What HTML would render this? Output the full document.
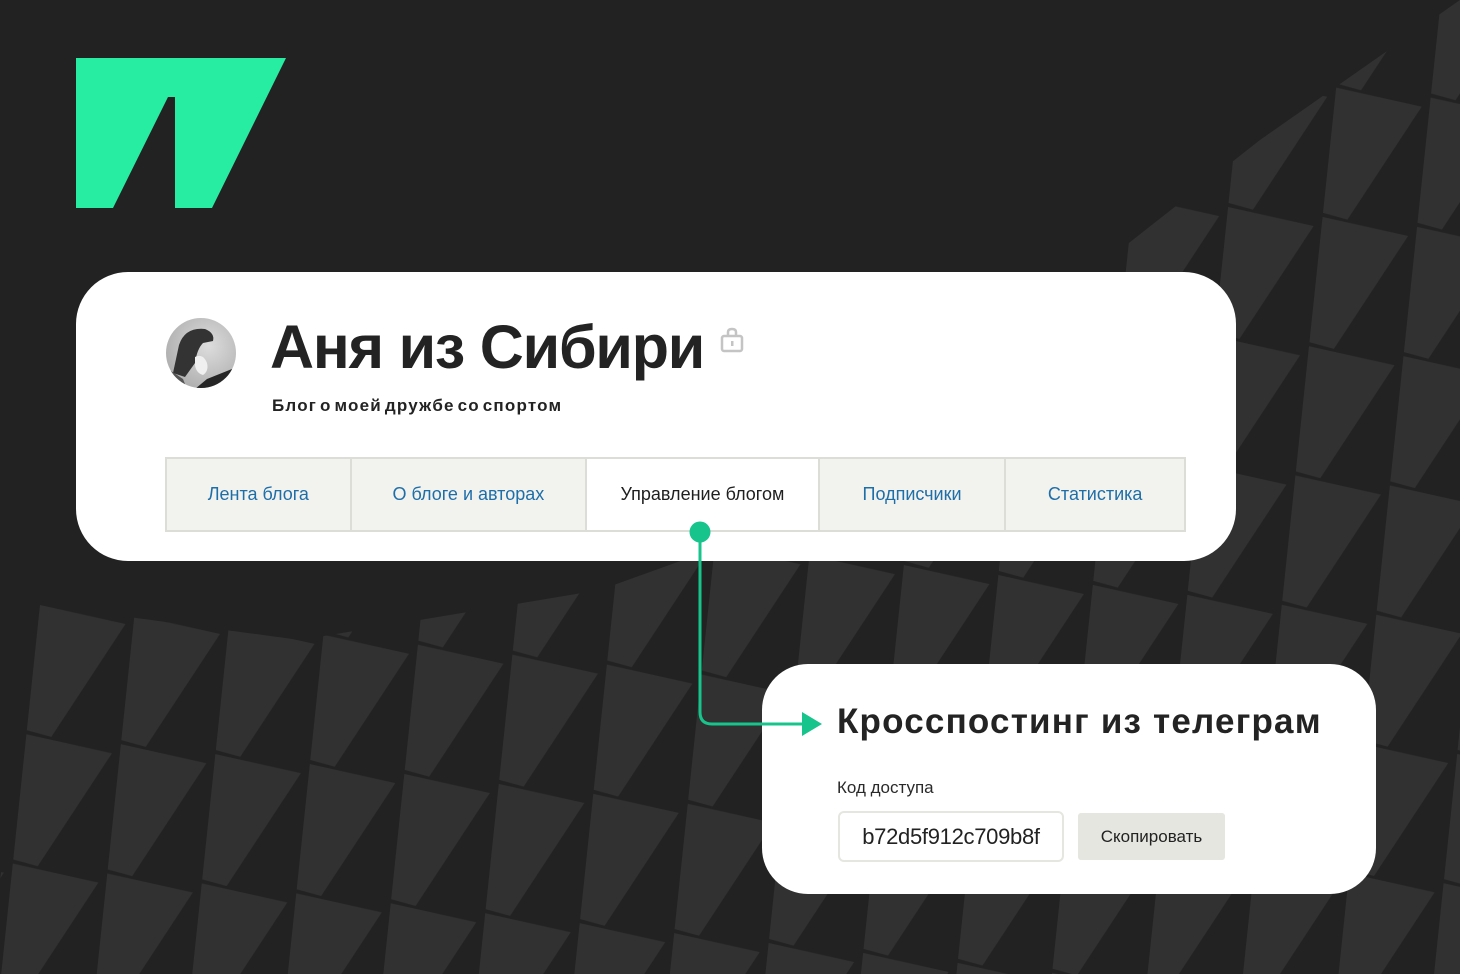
<!DOCTYPE html>
<html><head><meta charset="utf-8"><style>
*{margin:0;padding:0;box-sizing:border-box}
body{width:1460px;height:974px;background:#222;overflow:hidden;position:relative;font-family:"Liberation Sans",sans-serif}
#bg{position:absolute;left:0;top:0}
.card1{position:absolute;left:76px;top:272px;width:1160px;height:289px;background:#fff;border-radius:52px}
.card2{position:absolute;left:762px;top:664px;width:614px;height:230px;background:#fff;border-radius:46px}
.title{position:absolute;left:270px;top:312px;font-size:61px;font-weight:bold;color:#232323;letter-spacing:-1.2px;white-space:nowrap}
.sub{position:absolute;left:272px;top:396px;font-size:17px;font-weight:bold;color:#232323;letter-spacing:1.2px;word-spacing:-3px;white-space:nowrap}
.tabs{position:absolute;left:165px;top:457px;width:1021px;height:75px;border:2px solid #ddddd8;background:#f2f2ee;display:flex}
.tab{height:100%;display:flex;align-items:center;justify-content:center;font-size:18px;color:#1e6ea8;letter-spacing:0;border-right:2px solid #ddddd8;white-space:nowrap}
.tab:last-child{border-right:none}
.tab.act{background:#fff;color:#1f1f1f}
.h2{position:absolute;left:837px;top:702px;font-size:35px;font-weight:bold;color:#232323;letter-spacing:1.2px;white-space:nowrap}
.lbl{position:absolute;left:837px;top:778px;font-size:17px;color:#2a2a2a;letter-spacing:0}
.inp{position:absolute;left:838px;top:811px;width:226px;height:51px;border:2px solid #e6e6e0;border-radius:6px;font-size:22px;color:#222;display:flex;align-items:center;justify-content:center;letter-spacing:-0.3px}
.btn{position:absolute;left:1078px;top:813px;width:147px;height:47px;background:#e6e6e0;border-radius:3px;font-size:17px;color:#222;display:flex;align-items:center;justify-content:center;letter-spacing:0}
#fg{position:absolute;left:0;top:0}
</style></head><body>
<svg id="bg" width="1460" height="974">
<defs>
<pattern id="p" width="95" height="130" patternUnits="userSpaceOnUse" patternTransform="translate(40,605) rotate(6)">
<polygon points="0,0 87,10 25,130 -5,125" fill="#313131"/>
</pattern>
<clipPath id="c"><polygon points="0,880 40,605 300,640 600,590 850,500 1000,360 1120,250 1260,140 1460,0 1460,974 0,974"/></clipPath>
</defs>
<rect width="1460" height="974" fill="url(#p)" clip-path="url(#c)"/>
<polygon points="76,58 286,58 212,208 175,208 175,97 168,97 113,208 76,208" fill="#27eda2"/>
</svg>
<div class="card1"></div>
<svg style="position:absolute;left:165px;top:317px" width="72" height="72">
<defs><clipPath id="av"><circle cx="36" cy="36" r="35"/></clipPath>
<radialGradient id="g" cx="0.6" cy="0.4" r="0.7"><stop offset="0" stop-color="#ddd"/><stop offset="1" stop-color="#aaa"/></radialGradient></defs>
<g clip-path="url(#av)">
<rect width="72" height="72" fill="url(#g)"/>
<path d="M14,28 Q20,10 40,12 Q50,16 48,24 L38,26 Q32,32 30,46 L20,60 L8,56 Z" fill="#333"/>
<path d="M30,40 Q38,36 42,46 Q44,54 38,58 Q31,56 30,48 Z" fill="#f0f0f0"/>
<path d="M42,62 L72,50 L72,72 L30,72 Z" fill="#262626"/>
<path d="M0,50 L18,62 L22,72 L0,72 Z" fill="#555"/>
</g></svg>
<div class="title">Аня из Сибири</div>
<svg style="position:absolute;left:720px;top:327px" width="24" height="26" viewBox="0 0 24 26">
<path d="M8,9 V5 Q8,2 12,2 Q16,2 16,5 V9" fill="none" stroke="#c4c4c4" stroke-width="2.5"/>
<rect x="2" y="9" width="20" height="15" rx="2" fill="none" stroke="#c4c4c4" stroke-width="2.5"/>
<rect x="11" y="14" width="2.5" height="5" fill="#c4c4c4"/>
</svg>
<div class="sub">Блог о моей дружбе со спортом</div>
<div class="tabs">
<div class="tab" style="width:185px">Лента блога</div>
<div class="tab" style="width:236px">О блоге и авторах</div>
<div class="tab act" style="width:233px">Управление блогом</div>
<div class="tab" style="width:187px">Подписчики</div>
<div class="tab" style="width:178px">Статистика</div>
</div>
<div class="card2"></div>
<div class="h2">Кросспостинг из телеграм</div>
<div class="lbl">Код доступа</div>
<div class="inp">b72d5f912c709b8f</div>
<div class="btn">Скопировать</div>
<svg id="fg" width="1460" height="974" style="pointer-events:none">
<path d="M700,532 V712 Q700,724 712,724 H806" fill="none" stroke="#17c48b" stroke-width="3"/>
<polygon points="802,712 822,724 802,736" fill="#17c48b"/>
<circle cx="700" cy="532" r="10.5" fill="#17c48b"/>
</svg>
</body></html>
